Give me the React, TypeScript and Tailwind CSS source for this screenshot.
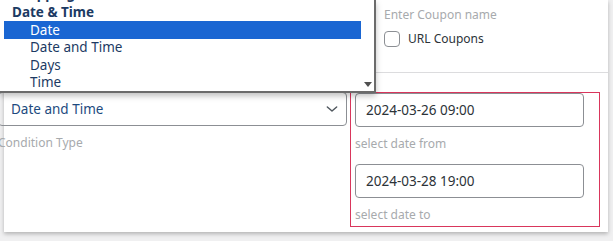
import React from "react";

const font = { fontFamily: '"Noto Sans", "Open Sans", sans-serif' };

export default function App() {
  return (
    <div
      className="relative w-[613px] h-[241px] overflow-hidden bg-[#f0f0f1]"
      style={font}
    >
      {/* card */}
      <div className="ml-[4px] w-[604px] h-[232px] bg-white shadow-[0_2px_4px_rgba(0,0,0,0.25)] flex flex-col">
        {/* top area */}
        <div className="h-[73px] border-b border-[#dcdcde] flex">
          <div className="w-[380px]" />
          <div className="flex flex-col pt-[6px]">
            <div className="text-[12px] leading-[18px] text-[#a7aaad]">Enter Coupon name</div>
            <label className="mt-[6px] flex items-center gap-[8px]">
              <span className="w-[16px] h-[16px] rounded-[4px] border border-[#8c8f94] bg-white" />
              <span className="text-[12px] text-[#2c3338]">URL Coupons</span>
            </label>
          </div>
        </div>
        {/* row */}
        <div className="flex pt-[19px] ml-[-6px]">
          <div className="w-[349px] flex flex-col">
            <div className="h-[34px] rounded-[4px] border border-[#8c8f94] flex items-center justify-between pl-[12px] pr-[6px]">
              <span className="text-[13.5px] text-[#1d4a7e]">Date and Time</span>
              <svg width="16" height="16" viewBox="0 0 24 24" fill="none" stroke="#50575e" strokeWidth="2.2" strokeLinecap="round" strokeLinejoin="round">
                <path d="M5 9l7 6 7-6" />
              </svg>
            </div>
            <div className="mt-[8px] text-[12px] leading-[18px] text-[#a7aaad]">Condition Type</div>
          </div>
          <div className="ml-[3px] w-[250px] h-[135px] border border-[#d9365c] pl-[4px] pr-[15px] flex flex-col">
            <div className="h-[34px] rounded-[4px] border border-[#8c8f94] flex items-center pl-[10px] text-[13.5px] text-[#2c3338]">
              2024-03-26 09:00
            </div>
            <div className="mt-[8px] text-[12px] leading-[18px] text-[#a7aaad]">select date from</div>
            <div className="mt-[11px] h-[34px] rounded-[4px] border border-[#8c8f94] flex items-center pl-[10px] text-[13.5px] text-[#2c3338]">
              2024-03-28 19:00
            </div>
            <div className="mt-[8px] text-[12px] leading-[18px] text-[#a7aaad]">select date to</div>
          </div>
        </div>
      </div>

      {/* open dropdown list */}
      <div className="absolute left-0 top-0 w-[376px] h-[93px] bg-white border-r-[2px] border-b-[2px] border-[#6b6b6b] shadow-[0_3px_6px_rgba(0,0,0,0.25)] flex overflow-hidden">
        <div className="flex-1 pl-[4px] pt-[3.5px] flex flex-col text-[13.5px] leading-[17.5px] text-[#1c3a63]">
          <div className="-mt-[17.5px] h-[17.5px] pl-[8px] font-bold">Shopping Cart</div>
          <div className="h-[17.5px] pl-[8px] font-bold">Date &amp; Time</div>
          <div className="h-[18px] leading-[18px] pl-[26px] bg-[#1a66d2] text-white">Date</div>
          <div className="h-[17.5px] pl-[26px]">Date and Time</div>
          <div className="h-[17.5px] pl-[26px]">Days</div>
          <div className="h-[17.5px] pl-[26px]">Time</div>
        </div>
        <div className="w-[13px] flex flex-col justify-end items-center pb-[4px]">
          <svg width="8" height="5" viewBox="0 0 8 5">
            <path d="M0 0h8L4 5z" fill="#505050" />
          </svg>
        </div>
      </div>
    </div>
  );
}
